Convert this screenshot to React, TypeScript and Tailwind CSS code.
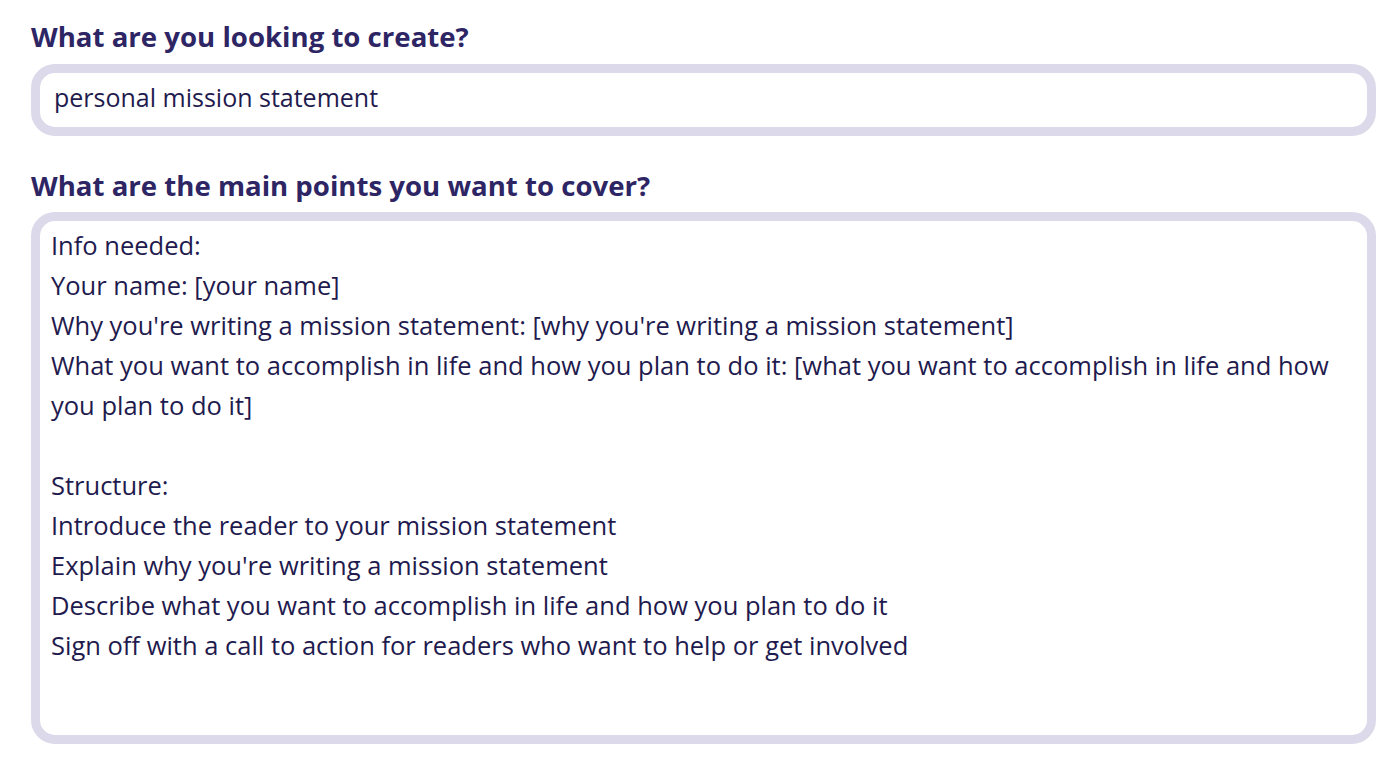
import React from "react";

const points = [
  "Info needed:",
  "Your name: [your name]",
  "Why you're writing a mission statement: [why you're writing a mission statement]",
  "What you want to accomplish in life and how you plan to do it: [what you want to accomplish in life and how",
  "you plan to do it]",
  "",
  "Structure:",
  "Introduce the reader to your mission statement",
  "Explain why you're writing a mission statement",
  "Describe what you want to accomplish in life and how you plan to do it",
  "Sign off with a call to action for readers who want to help or get involved",
];

export default function App() {
  return (
    <main
      className="min-h-screen bg-white pl-[31px] pr-[24px] pt-[18px] text-[#1f1b4e]"
      style={{ fontFamily: "'Open Sans', 'Noto Sans', sans-serif" }}
    >
      <h2 className="text-[27.6px] font-bold leading-[36px] text-[#2d2564]">
        What are you looking to create?
      </h2>

      <div className="mt-[10px] flex h-[72px] items-center rounded-[24px] border-[9px] border-[#dcdaea] bg-white px-[14px] pb-[6px]">
        <span className="text-[25px] leading-none">personal mission statement</span>
      </div>

      <h2 className="mt-[31px] text-[27.6px] font-bold leading-[36px] text-[#2d2564]">
        What are the main points you want to cover?
      </h2>

      <div className="mt-[9px] h-[532px] rounded-[24px] border-[9px] border-[#dcdaea] bg-white px-[11px] pt-[4px]">
        {points.map((line, i) => (
          <div key={i} className="h-[40px] text-[25.5px] leading-[40px] whitespace-pre">
            {line}
          </div>
        ))}
      </div>
    </main>
  );
}
